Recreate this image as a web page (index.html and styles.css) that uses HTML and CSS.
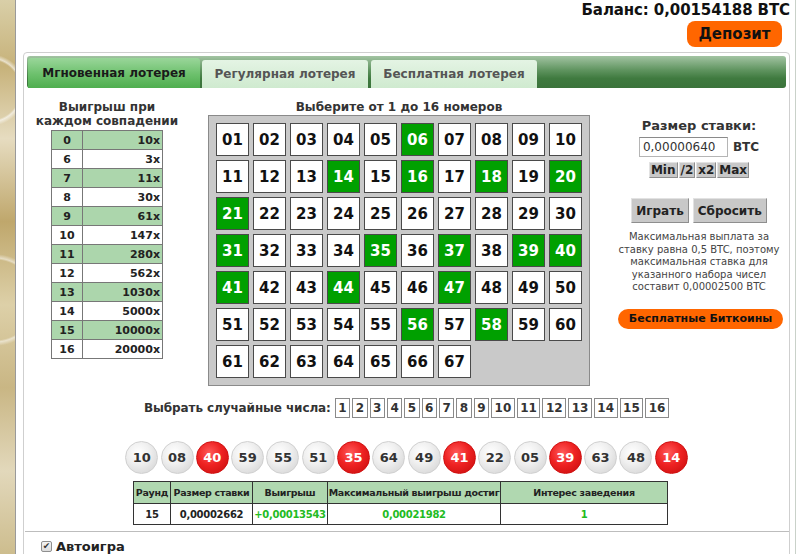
FILE: index.html
```html
<!DOCTYPE html>
<html lang="ru">
<head>
    <meta charset="UTF-8">
    <title>Мгновенная лотерея</title>
    <link rel="stylesheet" href="styles.css">
</head>
<body>

<div class="strip"></div>

<div class="page">
    <div class="top">
        <div class="balance">Баланс: 0,00154188 BTC</div>
        <a href="#" class="deposit">Депозит</a>
    </div>

    <div class="panel">
        <div class="tabs">
            <div class="tab active">Мгновенная лотерея</div>
            <div class="tab">Регулярная лотерея</div>
            <div class="tab">Бесплатная лотерея</div>
        </div>

        <div class="game">
            <div class="payouts">
                <div class="col-title">Выигрыш при<br>каждом совпадении</div>
                <table class="pay-table">
                    <tr class="hl"><td>0</td><td>10x</td></tr>
                    <tr><td>6</td><td>3x</td></tr>
                    <tr class="hl"><td>7</td><td>11x</td></tr>
                    <tr><td>8</td><td>30x</td></tr>
                    <tr class="hl"><td>9</td><td>61x</td></tr>
                    <tr><td>10</td><td>147x</td></tr>
                    <tr class="hl"><td>11</td><td>280x</td></tr>
                    <tr><td>12</td><td>562x</td></tr>
                    <tr class="hl"><td>13</td><td>1030x</td></tr>
                    <tr><td>14</td><td>5000x</td></tr>
                    <tr class="hl"><td>15</td><td>10000x</td></tr>
                    <tr><td>16</td><td>20000x</td></tr>
                </table>
            </div>

            <div class="board">
                <div class="col-title">Выберите от 1 до 16 номеров</div>
                <div class="grid" id="grid"></div>
            </div>

            <div class="bet">
                <div class="bet-title">Размер ставки:</div>
                <div class="bet-row">
                    <input type="text" class="bet-input" value="0,00000640">
                    <span class="btc">BTC</span>
                </div>
                <div class="mini-btns">
                    <button class="gbtn small">Min</button>
                    <button class="gbtn small">/2</button>
                    <button class="gbtn small">x2</button>
                    <button class="gbtn small">Max</button>
                </div>
                <div class="play-btns">
                    <button class="gbtn">Играть</button>
                    <button class="gbtn">Сбросить</button>
                </div>
                <p class="note">Максимальная выплата за<br>ставку равна 0,5 BTC, поэтому<br>максимальная ставка для<br>указанного набора чисел<br>составит 0,00002500 BTC</p>
                <a href="#" class="free-btn">Бесплатные Биткоины</a>
            </div>
        </div>

        <div class="random">
            <span class="random-label">Выбрать случайные числа:</span>
            <span class="rnd-list" id="rnd"></span>
        </div>

        <div class="balls" id="balls"></div>

        <table class="stats">
            <tr>
                <th class="c1">Раунд</th>
                <th class="c2">Размер ставки</th>
                <th class="c3">Выигрыш</th>
                <th class="c4">Максимальный выигрыш достиг</th>
                <th class="c5">Интерес заведения</th>
            </tr>
            <tr>
                <td>15</td>
                <td>0,00002662</td>
                <td class="win">+0,00013543</td>
                <td class="win">0,00021982</td>
                <td class="win">1</td>
            </tr>
        </table>

        <hr class="sep">

        <label class="auto"><span class="check">✔</span> Автоигра</label>
    </div>
</div>

<script>
    // number board
    var picked = [6, 14, 16, 18, 20, 21, 31, 35, 37, 39, 40, 41, 44, 47, 56, 58];
    var grid = document.getElementById('grid');
    for (var i = 1; i <= 67; i++) {
        var cell = document.createElement('div');
        cell.className = 'cell' + (picked.indexOf(i) >= 0 ? ' on' : '');
        cell.textContent = i < 10 ? '0' + i : i;
        grid.appendChild(cell);
    }

    // random pick buttons
    var rnd = document.getElementById('rnd');
    for (var j = 1; j <= 16; j++) {
        var b = document.createElement('span');
        b.className = 'rnd';
        b.textContent = j;
        rnd.appendChild(b);
    }

    // drawn balls
    var drawn = [10, 8, 40, 59, 55, 51, 35, 64, 49, 41, 22, 5, 39, 63, 48, 14];
    var balls = document.getElementById('balls');
    drawn.forEach(function (n) {
        var ball = document.createElement('div');
        ball.className = 'ball' + (picked.indexOf(n) >= 0 ? ' hit' : '');
        ball.textContent = n < 10 ? '0' + n : n;
        balls.appendChild(ball);
    });
</script>

</body>
</html>
```

FILE: styles.css
```css
body {
    margin: 0;
    height: 554px;
    overflow: hidden;
    display: flex;
    background-color: #fff;
    font-family: "DejaVu Sans", Verdana, sans-serif;
    color: #222;
}
.strip {
    flex: none;
    width: 15px;
    border-right: 1px solid #9a9a9a;
    background:
        radial-gradient(circle at -10px 90px, transparent 30px, rgba(255,255,255,0.6) 32px, transparent 36px),
        radial-gradient(circle at -5px 300px, transparent 40px, rgba(255,255,255,0.5) 42px, transparent 46px),
        linear-gradient(to bottom, #d9cfa8 0%, #c7b27a 12%, #e6dcc0 25%, #bfa76c 40%, #ddd0a8 55%, #c9b684 70%, #e2d8bb 85%, #cdbd8e 100%);
}
.page {
    flex: none;
    width: 767px;
    padding: 0 5px 0 7px;
    border-right: 1px solid #c9d1c9;
}

/* header */
.top {
    height: 52px;
    display: flex;
    flex-direction: column;
    align-items: flex-end;
}
.balance {
    margin-top: 1px;
    font-size: 15px;
    font-weight: bold;
    line-height: 18px;
    letter-spacing: -0.1px;
    color: #111;
}
.deposit {
    margin-top: 2px;
    margin-right: 8px;
    width: 95px;
    height: 26px;
    line-height: 26px;
    text-align: center;
    background-color: #ff6600;
    border-radius: 8px;
    font-size: 15px;
    font-weight: bold;
    color: #111;
    text-decoration: none;
}

/* panel */
.panel {
    border: 1px solid #cfcfcf;
    border-radius: 4px;
    padding: 3px;
    height: 520px;
}
.tabs {
    height: 32px;
    display: flex;
    align-items: flex-end;
    padding-left: 1px;
    border-radius: 3px;
    background: linear-gradient(to bottom, #a3c4a3 0%, #5e935e 45%, #3f7a3f 70%, #3b733b 100%);
}
.tab {
    height: 28px;
    line-height: 28px;
    margin-right: 3px;
    text-align: center;
    font-size: 12px;
    font-weight: bold;
    color: #555;
    border-radius: 3px 3px 0 0;
    background: linear-gradient(to bottom, #e4f4e4 0%, #cfeacf 100%);
    width: 166px;
}
.tab.active {
    width: 172px;
    height: 30px;
    line-height: 31px;
    margin-right: 2px;
    color: #1a1a1a;
    background: linear-gradient(to bottom, #9ad69a 0%, #6cc06c 55%, #4fae4f 100%);
}

.game {
    display: flex;
    margin-top: 12px;
}
.col-title {
    font-size: 12px;
    font-weight: bold;
    line-height: 14px;
    text-align: center;
    color: #333;
}

/* payout table */
.payouts {
    width: 160px;
}
.pay-table {
    margin: 2px auto 0;
    border-collapse: collapse;
    border: 1px solid #555;
    font-size: 11px;
    font-weight: bold;
}
.pay-table td {
    height: 18px;
    padding: 0 2px;
    border: 1px solid #777;
}
.pay-table td:first-child {
    width: 26px;
    text-align: center;
}
.pay-table td:last-child {
    width: 75px;
    text-align: right;
}
.pay-table tr.hl td {
    background-color: #acd6ac;
}

/* number board */
.board {
    margin-left: 21px;
    width: 382px;
}
.board .col-title {
    line-height: 15px;
}
.grid {
    display: grid;
    grid-template-columns: repeat(10, 33px);
    grid-auto-rows: 33px;
    gap: 4px;
    padding: 7px;
    height: 255px;
    background-color: #c9c9c9;
    border: 1px solid #8a8a8a;
}
.cell {
    box-sizing: border-box;
    display: flex;
    align-items: center;
    justify-content: center;
    background-color: #fff;
    border: 1px solid #4a4a4a;
    font-size: 15px;
    font-weight: bold;
    color: #111;
}
.cell.on {
    background-color: #00a000;
    color: #fff;
}

/* bet panel */
.bet {
    margin-left: 22px;
    width: 174px;
    text-align: center;
}
.bet-title {
    margin-top: 18px;
    font-size: 13px;
    font-weight: bold;
    line-height: 16px;
    color: #333;
}
.bet-row {
    margin-top: 3px;
    display: flex;
    justify-content: center;
    align-items: center;
    gap: 5px;
}
.bet-input {
    box-sizing: border-box;
    width: 89px;
    height: 20px;
    padding: 0 3px;
    border: 1px solid #b5b5b5;
    border-top-color: #8a8a8a;
    font-family: "DejaVu Sans", Verdana, sans-serif;
    font-size: 12px;
    color: #333;
}
.btc {
    font-size: 12px;
    font-weight: bold;
    color: #333;
}
.gbtn {
    height: 25px;
    padding: 0 4px;
    background-color: #c8c8c8;
    border: 1px solid;
    border-color: #e2e2e2 #8e8e8e #8e8e8e #e2e2e2;
    font-family: "DejaVu Sans", Verdana, sans-serif;
    font-size: 12px;
    font-weight: bold;
    color: #222;
}
.gbtn.small {
    height: 16px;
    padding: 0 1px;
    font-size: 12px;
    line-height: 13px;
}
.mini-btns {
    margin-top: 5px;
    display: flex;
    justify-content: center;
    gap: 1px;
}
.play-btns {
    margin-top: 20px;
    display: flex;
    justify-content: center;
    gap: 4px;
}
.note {
    margin: 8px 0 0;
    font-size: 10px;
    line-height: 12.5px;
    color: #444;
}
.free-btn {
    display: block;
    margin: 15px 3px 0 6px;
    height: 20px;
    line-height: 20px;
    background-color: #ff6600;
    border-radius: 10px;
    font-size: 11px;
    font-weight: bold;
    color: #111;
    text-decoration: none;
}

/* random pick */
.random {
    margin-top: 12px;
    display: flex;
    justify-content: center;
    align-items: center;
    gap: 4px;
}
.random-label {
    font-size: 12px;
    font-weight: bold;
    letter-spacing: -0.1px;
    color: #333;
}
.rnd-list {
    display: flex;
    gap: 2px;
}
.rnd {
    box-sizing: border-box;
    height: 20px;
    line-height: 18px;
    padding: 0 2.5px;
    border: 1px solid #8a8a8a;
    font-size: 12px;
    font-weight: bold;
    color: #333;
}

/* drawn balls */
.balls {
    margin-top: 23px;
    display: flex;
    justify-content: center;
    gap: 2.3px;
}
.ball {
    box-sizing: border-box;
    width: 33px;
    height: 33px;
    border-radius: 50%;
    display: flex;
    align-items: center;
    justify-content: center;
    border: 1px solid #d0d0d0;
    background: radial-gradient(circle at 40% 35%, #ffffff 0%, #f0f0f0 40%, #cfcfcf 100%);
    font-size: 13px;
    font-weight: bold;
    color: #333;
}
.ball.hit {
    border-color: #d01010;
    background: radial-gradient(circle at 40% 35%, #ff5a5a 0%, #ee2222 45%, #c40a0a 100%);
    color: #fff;
}

/* stats */
.stats {
    margin: 7px 0 0 106px;
    width: 535px;
    table-layout: fixed;
    border-collapse: collapse;
    border: 1px solid #333;
    font-size: 9.5px;
    font-weight: bold;
    letter-spacing: -0.3px;
    text-align: center;
    white-space: nowrap;
    color: #222;
}
.stats th {
    height: 21px;
    padding: 0;
    background-color: #b0d8b0;
    border: 1px solid #333;
}
.stats td {
    height: 20px;
    padding: 0;
    font-size: 10px;
    border: 1px solid #333;
}
.stats .c1 { width: 36px; }
.stats .c2 { width: 81px; }
.stats .c3 { width: 74px; }
.stats .c4 { width: 172px; }
.stats .c5 { width: 166px; }
.stats td.win {
    color: #22bb22;
}

.sep {
    margin: 6px -3px 0 -2px;
    border: none;
    border-top: 1px solid #bdbdbd;
}
.auto {
    display: flex;
    align-items: center;
    gap: 4px;
    margin: 7px 0 0 14px;
    font-size: 13px;
    font-weight: bold;
    color: #222;
}
.check {
    box-sizing: border-box;
    width: 11px;
    height: 11px;
    border: 1px solid #8f8f8f;
    border-radius: 2px;
    background: linear-gradient(to bottom, #f4f4f4, #dcdcdc);
    font-size: 9px;
    line-height: 9px;
    text-align: center;
    color: #333;
}
```
